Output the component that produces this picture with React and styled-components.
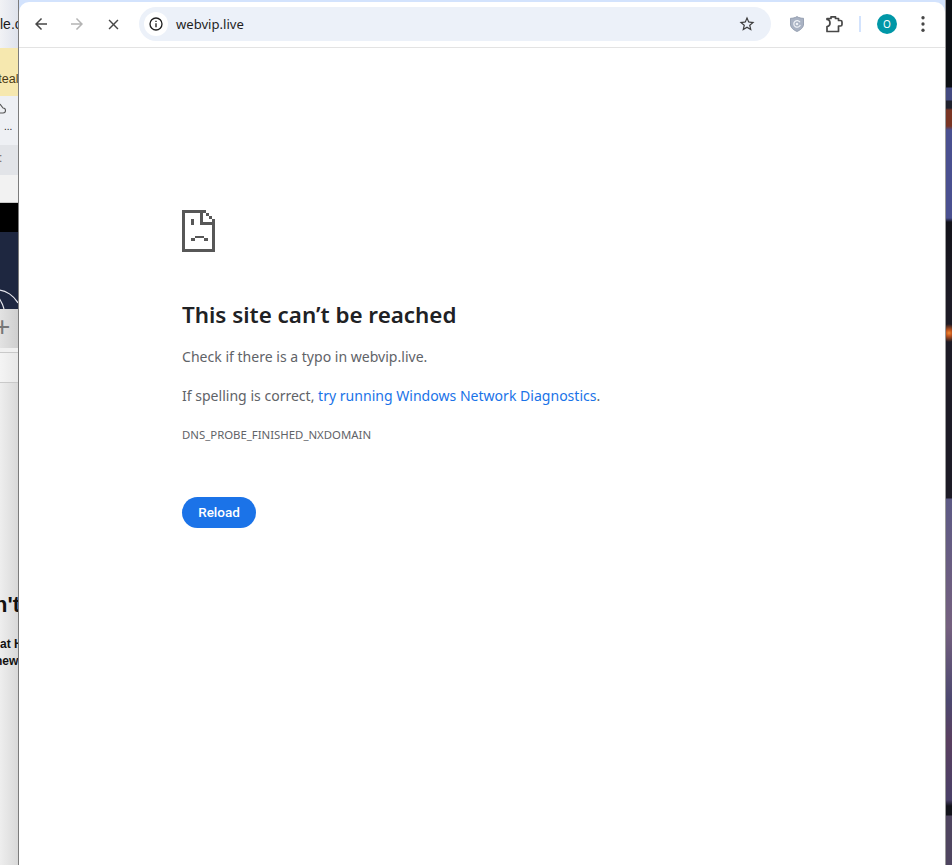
import React from "react"
import styled, { createGlobalStyle } from "styled-components"

let GlobalStyle = createGlobalStyle`
  html, body, #root {
    margin: 0;
    height: 100%;
    overflow: hidden;
  }
  body {
    font-family: "Noto Sans", "Open Sans", sans-serif;
    background: #fff;
  }
`

let Desktop = styled.div`
  display: flex;
  height: 865px;
  width: 952px;
`

/* the browser window sticking out behind on the left */
let BehindWindow = styled.div`
  flex: none;
  width: 18px;
  display: flex;
  flex-direction: column;
  overflow: hidden;
  font-family: "Liberation Sans", sans-serif;
  white-space: nowrap;
  color: #1a1a1a;
`

let Band = styled.div`
  flex: none;
  height: ${p => p.$h}px;
  background: ${p => p.$bg};
  display: flex;
  flex-direction: column;
  border-bottom: ${p => (p.$line ? "1px solid #c9c9c9" : "none")};
  box-sizing: border-box;
  overflow: hidden;
`

let TabText = styled.div`
  font-size: 14px;
  line-height: 16px;
  margin-top: 16px;
`

let BannerText = styled.div`
  font-size: 12.5px;
  line-height: 14px;
  margin-top: 24px;
  text-indent: -8px;
  color: #4a3a14;
`

let Dots = styled.div`
  font-size: 10px;
  line-height: 10px;
  margin-top: 6px;
  text-indent: 4px;
`

let Plus = styled.div`
  font-size: 28px;
  line-height: 30px;
  margin-top: 3px;
  text-indent: -6px;
  color: #777;
  font-weight: 300;
`

let Colon = styled.div`
  font-size: 12px;
  line-height: 14px;
  margin-top: 6px;
  text-indent: -1px;
  color: #666;
`

let BigText = styled.div`
  font-size: 22px;
  font-weight: 700;
  line-height: 26px;
  margin-top: 209px;
  text-indent: -6px;
  color: #111;
`

let SmallBold = styled.div`
  font-size: 12px;
  font-weight: 700;
  line-height: 17px;
  margin-top: ${p => p.$mt || 0}px;
  text-indent: ${p => p.$indent || 0}px;
  color: #111;
`

let Frame = styled.div`
  flex: none;
  width: 928px;
  box-sizing: border-box;
  border-left: 1px solid #7c7c7c;
  border-right: 1px solid #9a9a9a;
  display: flex;
  flex-direction: column;
  background: #d3e3fd;
  padding-top: 2px;
`

let Toolbar = styled.div`
  flex: none;
  height: 46px;
  box-sizing: border-box;
  background: #fff;
  border-bottom: 1px solid #e3e3e3;
  border-radius: 10px 10px 0 0;
  display: flex;
  align-items: center;
  padding: 0 4px 1px 4px;
`

let ToolButton = styled.div`
  flex: none;
  width: 36px;
  height: 36px;
  margin-left: ${p => p.$ml || 0}px;
  display: flex;
  align-items: center;
  justify-content: center;
  color: ${p => p.$color || "#474747"};
`

let Omnibox = styled.div`
  flex: 1;
  height: 34px;
  margin: 0 8px;
  border-radius: 17px;
  background: #ecf1f9;
  display: flex;
  align-items: center;
  padding: 0 10px 0 5px;
`

let InfoChip = styled.div`
  flex: none;
  width: 24px;
  height: 24px;
  border-radius: 50%;
  background: #fff;
  display: flex;
  align-items: center;
  justify-content: center;
  color: #1f1f1f;
`

let Url = styled.div`
  flex: 1;
  margin-left: 8px;
  font-size: 13.1px;
  color: #1f1f1f;
`

let StarButton = styled.div`
  flex: none;
  width: 28px;
  height: 28px;
  display: flex;
  align-items: center;
  justify-content: center;
  color: #3c3c3c;
`

let Divider = styled.div`
  flex: none;
  width: 2px;
  height: 16px;
  margin: 0 8px 0 7px;
  background: #d3e3fd;
`

let Avatar = styled.div`
  width: 20px;
  height: 20px;
  border-radius: 50%;
  background: #0097a7;
  color: #fff;
  font-size: 10px;
  display: flex;
  align-items: center;
  justify-content: center;
`

let Page = styled.main`
  flex: 1;
  background: #fff;
  padding: 162px 0 0 163px;
`

let SadIcon = styled.svg`
  display: block;
  width: 33px;
  height: 42px;
  shape-rendering: crispEdges;
`

let Title = styled.h1`
  margin: 48px 0 0;
  font-size: 22.4px;
  line-height: 30px;
  font-weight: 600;
  color: #202124;
`

let Para = styled.p`
  margin: ${p => p.$mt}px 0 0;
  font-size: 14.06px;
  line-height: 20px;
  color: #5f6368;
`

let Link = styled.a`
  color: #1a73e8;
  text-decoration: none;
`

let ErrorCode = styled.div`
  margin-top: 22px;
  font-size: 11.38px;
  line-height: 14px;
  color: #5f6368;
`

let ReloadButton = styled.button`
  display: block;
  margin-top: 55px;
  width: 74px;
  height: 31px;
  padding: 0 0 2px;
  border: 0;
  border-radius: 16px;
  background: #1b73e8;
  color: #fff;
  font-family: Roboto, sans-serif;
  font-size: 13.5px;
  font-weight: 500;
`

/* the desktop wallpaper on the right */
let Wallpaper = styled.div`
  flex: 1;
  background:
    radial-gradient(circle at 50% 333px, #f08a30 0, #c2551e 3px, rgba(120, 50, 30, 0) 9px),
    linear-gradient(
      to bottom,
      #0c0f14 0,
      #0c0f14 87px,
      #444a80 88px,
      #444a80 100px,
      #20222e 101px,
      #20222e 108px,
      #7a3524 110px,
      #7a3524 126px,
      #4a5090 130px,
      #4a5090 218px,
      #13131a 222px,
      #1d1b26 300px,
      #1d1b26 498px,
      #5d5a85 499px,
      #75607f 627px,
      #4d4870 700px,
      #5a3f60 740px,
      #4a4068 800px,
      #14141c 806px,
      #14141c 815px,
      #4f4560 816px,
      #4f4560 865px
    );
`

let Icon = ({ size = 16, children, ...rest }) => (
  <svg width={size} height={size} viewBox="0 0 24 24" fill="currentColor" {...rest}>
    {children}
  </svg>
)

let App = () => (
  <Desktop>
    <GlobalStyle />
    <BehindWindow>
      <Band $h={48} $bg="linear-gradient(to right, #f1f2f5, #dfe3ec)">
        <TabText>le.c</TabText>
      </Band>
      <Band $h={48} $bg="#f6e8af">
        <BannerText>steal</BannerText>
      </Band>
      <Band $h={49} $bg="#eef0f4">
        <svg width="18" height="20" viewBox="0 0 18 20">
          <path d="M-2 17 H3 a2.500 2.500 0 0 0 0-5 L0 8" stroke="#555" strokeWidth="1.1" fill="none" />
        </svg>
        <Dots>...</Dots>
      </Band>
      <Band $h={30} $bg="#e2e4e8">
        <Colon>:</Colon>
      </Band>
      <Band $h={28} $bg="#f2f2f2" $line />
      <Band $h={29} $bg="#000" />
      <Band $h={77} $bg="#1e2740">
        <svg width="18" height="77" viewBox="0 0 18 77">
          <path d="M-2 58 C6 58 14 64 18 71" stroke="#e8e8ee" strokeWidth="1.2" fill="none" />
          <path d="M-1 66 C1 69 3 73 4 77" stroke="#e8e8ee" strokeWidth="1.2" fill="none" />
        </svg>
      </Band>
      <Band $h={39} $bg="linear-gradient(to right, #e2e2e2, #cfcfcf)">
        <Plus>+</Plus>
      </Band>
      <Band $h={5} $bg="#f0f0f0" $line />
      <Band $h={30} $bg="linear-gradient(to right, #f4f4f4, #e8e8e8)" $line />
      <Band $h={482} $bg="linear-gradient(to right, #eeeeee, #d9d9d9)">
        <BigText>n't</BigText>
        <SmallBold $mt={18}>at H</SmallBold>
        <SmallBold $indent={-5}>new</SmallBold>
      </Band>
    </BehindWindow>

    <Frame>
      <Toolbar>
        <ToolButton>
          <Icon size={18}>
            <path d="M20 11H7.830l5.590-5.590L12 4l-8 8 8 8 1.410-1.410L7.830 13H20v-2z" />
          </Icon>
        </ToolButton>
        <ToolButton $color="#b4b4b4">
          <Icon size={18}>
            <path d="M4 11h12.170l-5.590-5.590L12 4l8 8-8 8-1.410-1.410L16.170 13H4v-2z" />
          </Icon>
        </ToolButton>
        <ToolButton>
          <Icon size={17}>
            <path d="M19 6.410 17.590 5 12 10.590 6.410 5 5 6.410 10.590 12 5 17.590 6.410 19 12 13.410 17.590 19 19 17.590 13.410 12z" />
          </Icon>
        </ToolButton>
        <Omnibox>
          <InfoChip>
            <Icon>
              <path d="M11 7h2v2h-2zm0 4h2v6h-2zm1-9a10 10 0 1 0 0 20 10 10 0 0 0 0-20zm0 18a8 8 0 1 1 0-16 8 8 0 0 1 0 16z" />
            </Icon>
          </InfoChip>
          <Url>webvip.live</Url>
          <StarButton>
            <Icon size={18}>
              <path d="M22 9.240l-7.190-.620L12 2 9.190 8.630 2 9.240l5.460 4.730L5.820 21 12 17.270 18.180 21l-1.630-7.030L22 9.240zM12 15.400l-3.760 2.270 1-4.280-3.320-2.880 4.380-.380L12 6.100l1.710 4.040 4.380.380-3.320 2.880 1 4.280L12 15.400z" />
            </Icon>
          </StarButton>
        </Omnibox>
        <ToolButton>
          <svg width="14" height="16" viewBox="0 0 16 18">
            <path d="M8 .5 C10 2 13 2.500 15.500 2.500 V9 C15.500 13 12 16 8 17.500 C4 16 .5 13 .5 9 V2.500 C3 2.500 6 2 8 .5z" fill="#a9b2c3" stroke="#8f99ac" />
            <path d="M11.500 7 A3.800 3.800 0 1 0 11.800 10" fill="none" stroke="#eef1f6" strokeWidth="1.400" />
            <circle cx="8" cy="9" r="1.500" fill="#eef1f6" />
          </svg>
        </ToolButton>
        <ToolButton $ml={1}>
          <svg width="18" height="18" viewBox="0 0 18 18">
            <path
              d="M2 3.500H6V1.800H10.500V3.500H13.500V5.500H15.500a1.500 1.500 0 0 1 1.500 1.500V9.500a1.500 1.500 0 0 1-1.500 1.500H13.500V16.500H2V11.500C4 11.500 5 10 5 8C5 6 4 4.500 2 4.500Z"
              fill="none"
              stroke="currentColor"
              strokeWidth="1.700"
              strokeLinejoin="round"
            />
          </svg>
        </ToolButton>
        <Divider />
        <ToolButton>
          <Avatar>O</Avatar>
        </ToolButton>
        <ToolButton>
          <Icon size={20}>
            <circle cx="12" cy="4.500" r="2" />
            <circle cx="12" cy="12" r="2" />
            <circle cx="12" cy="19.500" r="2" />
          </Icon>
        </ToolButton>
      </Toolbar>
      <Page>
        <SadIcon viewBox="0 0 33 42" fill="#575757">
          <path d="M0 0h24v3h3v3h3v3h3v33H0zM3 3v36h27V15H18V3zM21 3v9h9v-3h-3V6h-3V3z" fillRule="evenodd" />
          <path d="M9 9h3v6H9zM13 26h9v2H13zM9 28h4v3H9zM22 28h4v3h-4z" />
        </SadIcon>
        <Title>This site can’t be reached</Title>
        <Para $mt={17}>Check if there is a typo in webvip.live.</Para>
        <Para $mt={19}>
          If spelling is correct, <Link>try running Windows Network Diagnostics</Link>.
        </Para>
        <ErrorCode>DNS_PROBE_FINISHED_NXDOMAIN</ErrorCode>
        <ReloadButton>Reload</ReloadButton>
      </Page>
    </Frame>
    <Wallpaper />
  </Desktop>
)

export default App
